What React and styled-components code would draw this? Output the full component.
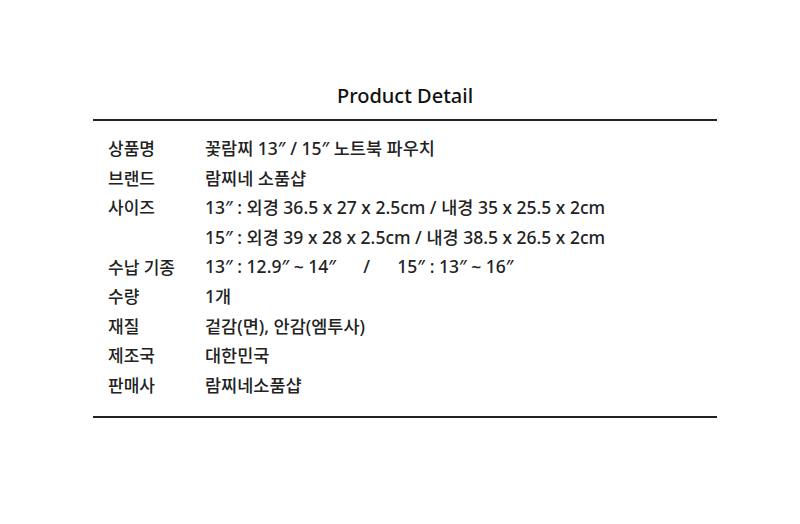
import React from 'react';
import styled, { createGlobalStyle } from 'styled-components';

const GlobalStyle = createGlobalStyle`
  html, body {
    margin: 0;
    padding: 0;
    background: #ffffff;
  }
  body {
    font-family: "Noto Sans", "Noto Sans CJK KR", sans-serif;
    color: #222;
  }
`;

const Page = styled.div`
  width: 800px;
  height: 524px;
  display: flex;
  flex-direction: column;
  align-items: center;
  padding-top: 83px;
  box-sizing: border-box;
`;

const Block = styled.section`
  width: 624px;
  margin-left: 10px;
`;

const Title = styled.h2`
  margin: 0 0 10px;
  text-align: center;
  font-size: 20px;
  font-weight: 500;
  line-height: 26px;
  color: #111;
`;

const Table = styled.div`
  border-top: 2px solid #222;
  border-bottom: 2px solid #222;
  padding: 12px 0 17px 15px;
  display: grid;
  grid-template-columns: 97px 1fr;
  grid-auto-rows: 29.6px;
  align-items: center;
`;

const Label = styled.div`
  font-size: 17px;
  font-weight: 500;
  color: #222;
  white-space: pre;
`;

const Value = styled.div`
  font-size: 17.5px;
  font-weight: 500;
  color: #222;
  white-space: pre;
  grid-column: 2;
`;

const rows = [
  ['상품명', ['꽃람찌 13″ / 15″ 노트북 파우치']],
  ['브랜드', ['람찌네 소품샵']],
  ['사이즈', ['13″ : 외경 36.5 x 27 x 2.5cm / 내경 35 x 25.5 x 2cm', '15″ : 외경 39 x 28 x 2.5cm / 내경 38.5 x 26.5 x 2cm']],
  ['수납 기종', ['13″ : 12.9″ ~ 14″      /      15″ : 13″ ~ 16″']],
  ['수량', ['1개']],
  ['재질', ['겉감(면), 안감(엠투사)']],
  ['제조국', ['대한민국']],
  ['판매사', ['람찌네소품샵']],
];

export default function App() {
  return (
    <>
      <GlobalStyle />
      <Page>
        <Block>
          <Title>Product Detail</Title>
          <Table>
            {rows.map(([label, values]) => (
              <React.Fragment key={label}>
                <Label>{label}</Label>
                {values.map((v, i) => (
                  <Value key={i}>{v}</Value>
                ))}
              </React.Fragment>
            ))}
          </Table>
        </Block>
      </Page>
    </>
  );
}
